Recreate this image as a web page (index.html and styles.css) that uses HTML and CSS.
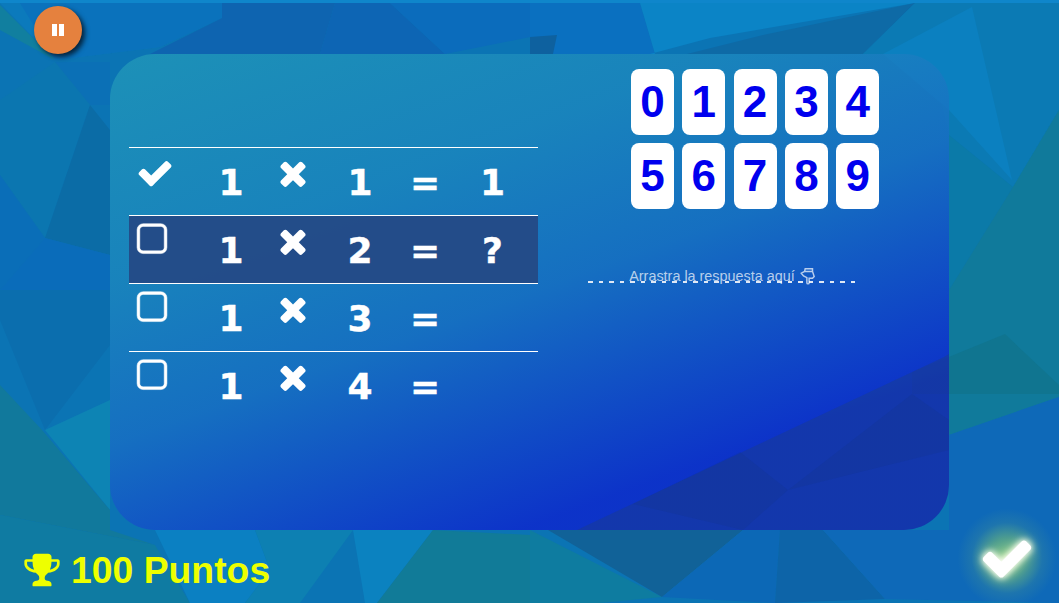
FILE: index.html
```html
<!DOCTYPE html>
<html lang="en">
<head>
    <meta charset="UTF-8">
    <meta name="viewport" content="width=device-width, initial-scale=1.0">
    <title>Tablas de multiplicar</title>
    <link rel="stylesheet" href="styles.css">
</head>
<body>
    <div id="stage">
        <svg id="backdrop" viewBox="0 0 1059 603" preserveAspectRatio="none" aria-hidden="true">
            <rect width="1059" height="603" fill="#0b74b4"/>
            <!-- top left -->
            <polygon points="0,3 222,3 222,18 160,47 55,60" fill="#0b7abc"/>
            <polygon points="20,3 222,3 222,18 160,47 55,60" fill="#0a72bc"/>
            <polygon points="0,5 55,60 0,30" fill="#117f9f"/>
            <polygon points="222,3 335,3 320,54 150,54 222,18" fill="#0e64b0"/>
            <polygon points="335,3 390,3 445,54 320,54" fill="#0d65b4"/>
            <polygon points="390,3 530,3 530,37 445,54" fill="#0b6cbc"/>
            <polygon points="530,3 640,3 655,54 530,54" fill="#0a70c0"/>
            <polygon points="530,37 557,35 553,54 530,54" fill="#0e619f"/>
            <polygon points="55,62 110,62 110,105 90,105" fill="#0b70b6"/>
            <polygon points="0,175 45,238 90,105 55,62 0,100" fill="#0b76b0"/>
            <polygon points="90,105 45,238 110,255 110,130" fill="#0b6ca6"/>
            <polygon points="0,175 45,238 0,290" fill="#0a6eb8"/>
            <polygon points="45,238 110,255 110,290 0,290" fill="#0a6cba"/>
            <polygon points="0,290 110,290 110,345 45,430 0,320" fill="#0b6eae"/>
            <!-- bottom left -->
            <polygon points="45,430 110,400 110,510" fill="#0d84b4"/>
            <polygon points="0,385 42,430 110,510 110,530 155,545 0,515" fill="#11799c"/>
            <polygon points="0,515 155,545 190,603 0,603" fill="#0f7ba2"/>
            <polygon points="155,530 255,530 270,570 245,603 190,603" fill="#0b80c2"/>
            <polygon points="255,530 353,530 300,603 245,603 270,570" fill="#0d80b2"/>
            <polygon points="353,530 433,530 377,603 365,603" fill="#0b82c0"/>
            <polygon points="433,530 530,535 530,603 377,603" fill="#117b98"/>
            <!-- bottom middle -->
            <polygon points="530,530 662,597 600,603 530,603" fill="#0e7ca0"/>
            <polygon points="548,530 743,530 662,597" fill="#116298"/>
            <polygon points="743,530 780,530 775,603 662,597" fill="#0c68b6"/>
            <polygon points="780,530 823,530 885,599 775,603" fill="#0d64a8"/>
            <!-- top right -->
            <polygon points="640,3 915,3 710,38 650,54 655,54" fill="#0b84c6"/>
            <polygon points="763,35 915,3 863,54 687,54" fill="#0e6aa6"/>
            <polygon points="915,3 1059,3 1059,110 1013,187 949,135 930,54 863,54" fill="#0b7ab4"/>
            <polygon points="883,54 972,7 1012,180 949,110" fill="#0b80c0"/>
            <polygon points="949,135 1013,187 949,290" fill="#0b7aa8"/>
            <polygon points="1013,187 1059,110 1059,300" fill="#0b7eac"/>
            <!-- lower right -->
            <polygon points="949,290 1013,187 1059,110 1059,397 949,435" fill="#107a9b"/>
            <polygon points="912,372 1005,334 1059,385 1059,394 912,394" fill="#107590"/>
            <polygon points="949,435 1059,397 1059,603 885,599 823,530 949,530" fill="#0e69b8"/>
        </svg>

        <div class="top-strip"></div>

        <button class="pause-btn" aria-label="Pausa">
            <span class="pause-bar"></span>
            <span class="pause-bar"></span>
        </button>

        <div class="panel">
            <svg class="panel-shade" viewBox="0 0 839 476" aria-hidden="true">
                <polygon class="shade" points="467,476 834,303 839,300 839,476"/>
                <polygon class="shade-deep" points="630,398 678,436 633,476 523,450"/>
                <polygon class="shade-deep" points="678,436 802,340 839,366 839,396"/>
            </svg>
            <div class="sums">
                <div class="sum-row">
                    <svg class="icon icon-done" viewBox="0 0 1792 1792"><use href="#check"/></svg>
                    <span>1</span>
                    <svg class="icon icon-times" viewBox="0 0 1792 1792"><use href="#times"/></svg>
                    <span>1</span>
                    <span>=</span>
                    <span>1</span>
                </div>
                <div class="sum-row current">
                    <svg class="icon icon-todo" viewBox="0 0 1792 1792"><use href="#square"/></svg>
                    <span>1</span>
                    <svg class="icon icon-times" viewBox="0 0 1792 1792"><use href="#times"/></svg>
                    <span>2</span>
                    <span>=</span>
                    <span>?</span>
                </div>
                <div class="sum-row">
                    <svg class="icon icon-todo" viewBox="0 0 1792 1792"><use href="#square"/></svg>
                    <span>1</span>
                    <svg class="icon icon-times" viewBox="0 0 1792 1792"><use href="#times"/></svg>
                    <span>3</span>
                    <span>=</span>
                    <span></span>
                </div>
                <div class="sum-row">
                    <svg class="icon icon-todo" viewBox="0 0 1792 1792"><use href="#square"/></svg>
                    <span>1</span>
                    <svg class="icon icon-times" viewBox="0 0 1792 1792"><use href="#times"/></svg>
                    <span>4</span>
                    <span>=</span>
                    <span></span>
                </div>
            </div>

            <div class="answers">
                <div class="tiles">
                    <div class="tile">0</div>
                    <div class="tile">1</div>
                    <div class="tile">2</div>
                    <div class="tile">3</div>
                    <div class="tile">4</div>
                    <div class="tile">5</div>
                    <div class="tile">6</div>
                    <div class="tile">7</div>
                    <div class="tile">8</div>
                    <div class="tile">9</div>
                </div>
                <div class="dropzone">
                    Arrastra la respuesta aquí
                    <svg class="hand" viewBox="0 0 16 16"><path d="M5.500 1.500h6.500v2.500l1.500 4.500-1.500 1.500h-3v4a1 1 0 0 1-2 0v-4.500l-3-1.500-2-2.500 3-1.500 .5-2.500zM5.500 4h6.500"/></svg>
                </div>
            </div>
        </div>

        <div class="footer">
            <div class="score">
                <svg class="trophy" viewBox="0 0 1792 1792"><path d="M522 883q-74-162-74-371h-256v96q0 78 94.500 162t235.500 113zm1078-275v-96h-256q0 209-74 371 141-29 235.500-113t94.500-162zm128-128v128q0 71-41.500 143t-112 130-173 97.500-215.500 44.500q-42 54-95 95-38 34-52.500 72.500t-14.500 89.500q0 54 30.500 91t97.500 37q75 0 133.500 45.500t58.500 114.500v64q0 14-9 23t-23 9h-832q-14 0-23-9t-9-23v-64q0-69 58.500-114.500t133.500-45.500q67 0 97.500-37t30.500-91q0-51-14.500-89.500t-52.500-72.500q-53-41-95-95-113-5-215.500-44.500t-173-97.500-112-130-41.500-143v-128q0-40 28-68t68-28h288v-96q0-66 47-113t113-47h576q66 0 113 47t47 113v96h288q40 0 68 28t28 68z"/></svg>
                100 Puntos
            </div>
            <div class="confirm-glow">
                <svg class="confirm" viewBox="0 0 1792 1792"><use href="#check"/></svg>
            </div>
        </div>

        <svg class="defs" aria-hidden="true">
            <defs>
                <path id="check" d="M1671 566q0 40-28 68l-724 724-136 136q-28 28-68 28t-68-28l-136-136-362-362q-28-28-28-68t28-68l136-136q28-28 68-28t68 28l294 295 656-657q28-28 68-28t68 28l136 136q28 28 28 68z"/>
                <path id="times" d="M1490 1322q0 40-28 68l-136 136q-28 28-68 28t-68-28l-294-294-294 294q-28 28-68 28t-68-28l-136-136q-28-28-28-68t28-68l294-294-294-294q-28-28-28-68t28-68l136-136q28-28 68-28t68 28l294 294 294-294q28-28 68-28t68 28l136 136q28 28 28 68t-28 68l-294 294 294 294q28 28 28 68z"/>
                <path id="square" d="M1312 256h-832q-66 0-113 47t-47 113v832q0 66 47 113t113 47h832q66 0 113-47t47-113v-832q0-66-47-113t-113-47zm288 160v832q0 119-84.500 203.500t-203.500 84.500h-832q-119 0-203.500-84.500t-84.500-203.500v-832q0-119 84.500-203.500t203.500-84.500h832q119 0 203.500 84.500t84.500 203.500z"/>
            </defs>
        </svg>
    </div>
</body>
</html>
```

FILE: styles.css
```css
* {
    margin: 0;
    padding: 0;
    box-sizing: border-box;
}
body {
    background: #0b74b4;
    overflow: hidden;
}
#stage {
    position: relative;
    width: 1059px;
    height: 603px;
    overflow: hidden;
    display: flex;
    flex-direction: column;
}
#backdrop {
    position: absolute;
    top: 0;
    left: 0;
    width: 100%;
    height: 100%;
}
.defs {
    position: absolute;
    width: 0;
    height: 0;
}
.top-strip {
    position: relative;
    flex: none;
    height: 3px;
    background: #0f86cb;
}
.pause-btn {
    position: absolute;
    top: 6px;
    left: 34px;
    width: 48px;
    height: 48px;
    display: flex;
    align-items: center;
    justify-content: center;
    gap: 2px;
    border: none;
    border-radius: 50%;
    background: #e5813e;
    box-shadow: 3px 3px 5px #04233c;
}
.pause-bar {
    width: 5px;
    height: 12px;
    background: #fff;
}
.panel {
    position: relative;
    flex: none;
    display: flex;
    width: 839px;
    height: 476px;
    margin: 51px 0 0 110px;
    border-radius: 45px;
    overflow: hidden;
    background: linear-gradient(160deg, rgba(33, 152, 184, 0.8), rgba(28, 135, 190, 0.8) 29%, rgba(24, 110, 196, 0.8) 50%, rgba(13, 35, 206, 0.8) 80%);
}
.panel-shade {
    position: absolute;
    top: 0;
    left: 0;
    width: 100%;
    height: 100%;
}
.shade {
    fill: rgba(40, 70, 80, 0.24);
}
.shade-deep {
    fill: rgba(30, 50, 60, 0.08);
}
.sums {
    position: relative;
    width: 409px;
    margin: 93px 0 0 19px;
    color: #fff;
    font-family: "DejaVu Sans", sans-serif;
    font-size: 36px;
    font-weight: bold;
    text-align: center;
    -webkit-text-stroke: 0.4px #fff;
}
.sum-row {
    display: grid;
    grid-template-columns: 68px 68px 56px 78px 52px 83px;
    align-items: center;
    height: 68px;
    padding-top: 2px;
    border-top: 1px solid #fff;
}
.sum-row.current {
    background: rgba(36, 74, 134, 0.95);
}
.icon {
    width: 38px;
    height: 38px;
    align-self: start;
    fill: #fff;
}
.icon-done {
    margin: 3.500px 0 0 7px;
}
.icon-todo {
    margin: 3px 0 0 4px;
    stroke: #fff;
    stroke-width: 24;
}
.icon-times {
    margin: 3.500px 0 0 9px;
}
.answers {
    position: relative;
    flex: 1;
    padding: 15px 0 0 50px;
}
.tiles {
    display: grid;
    grid-template-columns: repeat(5, 43px);
    gap: 8px 8.3px;
    margin-left: 43px;
}
.tile {
    height: 66px;
    border-radius: 8px;
    background: #fff;
    color: #0000ee;
    font-family: "Liberation Sans", Arial, sans-serif;
    font-size: 44px;
    font-weight: bold;
    line-height: 66px;
    text-align: center;
}
.dropzone {
    width: 267px;
    height: 16px;
    margin-top: 58px;
    padding-left: 3px;
    background: repeating-linear-gradient(to right, #dfe8f5 0 4.500px, transparent 4.500px 10.520px) left bottom / 100% 2px no-repeat;
    color: rgba(255, 255, 255, 0.7);
    font-family: "Liberation Sans", Arial, sans-serif;
    font-size: 14.400px;
    line-height: 18px;
    text-align: center;
    white-space: nowrap;
}
.hand {
    width: 18px;
    height: 18px;
    vertical-align: -4px;
    fill: none;
    stroke: rgba(255, 255, 255, 0.7);
    stroke-width: 1.300;
}
.footer {
    position: relative;
    flex: 1;
    min-height: 0;
    display: flex;
    justify-content: space-between;
    align-items: flex-start;
    padding: 0 2px 0 23px;
}
.score {
    display: flex;
    align-items: center;
    gap: 10px;
    margin-top: 21px;
    color: #eeff00;
    font-family: "Liberation Sans", Arial, sans-serif;
    font-size: 37.330px;
    font-weight: bold;
    line-height: 38px;
}
.trophy {
    width: 38px;
    height: 38px;
    fill: #eeff00;
}
.confirm-glow {
    display: flex;
    align-items: center;
    justify-content: center;
    width: 100px;
    height: 100px;
    margin-top: -22px;
    background: radial-gradient(circle, rgba(160, 220, 120, 0.85) 0, rgba(130, 200, 110, 0.55) 28%, rgba(110, 180, 120, 0.16) 50%, rgba(110, 180, 120, 0) 70%);
}
.confirm {
    width: 56px;
    height: 56px;
    fill: #fff;
    filter: drop-shadow(0 0 3px #fff) drop-shadow(0 0 4px #e8f8c8);
}
```
